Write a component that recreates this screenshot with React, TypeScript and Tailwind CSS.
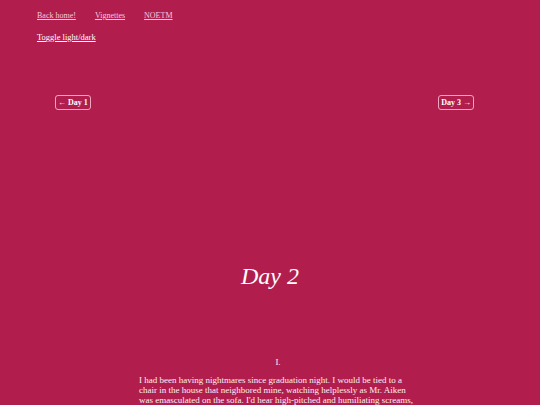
export default function App() {
  const serif = { fontFamily: '"Liberation Serif", "DejaVu Serif", serif' };

  return (
    <main
      className="h-[405px] w-[540px] overflow-hidden bg-[#b11e4d] text-[#fbeef2]"
      style={serif}
    >
      <nav className="flex gap-[19px] pl-[37px] pt-[11px] text-[8px] leading-[10px] text-[#f7c9d7]">
        <a href="#" className="underline">Back home!</a>
        <a href="#" className="underline">Vignettes</a>
        <a href="#" className="underline">NOETM</a>
      </nav>

      <div className="pl-[37px] pt-[11px] text-[8.5px] leading-[10px] text-white">
        <button className="underline">Toggle light/dark</button>
      </div>

      <div className="mt-[53px] flex justify-between pl-[55px] pr-[66px]">
        <a
          href="#"
          className="flex h-[15px] items-center rounded-[3px] border border-[#f0a7bd] px-[2px] text-[8px] font-bold text-white"
        >
          ← Day 1
        </a>
        <a
          href="#"
          className="flex h-[15px] items-center rounded-[3px] border border-[#f0a7bd] px-[2px] text-[8px] font-bold text-white"
        >
          Day 3 →
        </a>
      </div>

      <h1 className="mt-[151px] text-center text-[24px] italic leading-[30px] text-white">
        Day 2
      </h1>

      <div className="ml-[139px] mt-[66px] w-[278px] text-[9px] leading-[10px]">
        <p className="text-center">I.</p>
        <p className="mt-[8px]">
          I had been having nightmares since graduation night. I would be tied to a
          chair in the house that neighbored mine, watching helplessly as Mr. Aiken
          was emasculated on the sofa. I'd hear high-pitched and humiliating screams,
          and the voice of his tormentor echoed while he begged her to stop, and then
          I would wake up.
        </p>
      </div>
    </main>
  );
}
